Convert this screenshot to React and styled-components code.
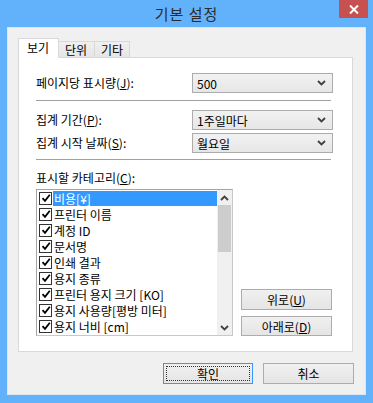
import styled, { createGlobalStyle } from 'styled-components';

const Global = createGlobalStyle`
  html, body { margin: 0; padding: 0; }
  body {
    font-family: "Noto Sans CJK KR", "Noto Sans", "Liberation Sans", sans-serif;
    font-size: 12px;
    color: #000;
  }
`;

// Fenêtre principale
const Window = styled.div`
  width: 373px;
  height: 403px;
  background: #62b1fb;
  box-sizing: border-box;
  padding: 0 7px 8px;
  display: flex;
  flex-direction: column;
`;

const TitleBar = styled.div`
  position: relative;
  height: 27px;
  display: flex;
  align-items: center;
  justify-content: center;
  font-size: 15px;
  color: #2b2b2b;
  letter-spacing: 1px;
`;

const CloseButton = styled.div`
  position: absolute;
  top: 0;
  right: -2px;
  width: 29px;
  height: 18px;
  background: #c75050;
  display: flex;
  align-items: center;
  justify-content: center;
`;

const Client = styled.div`
  flex: 1;
  background: #f0f0f0;
  border: 1px solid #dbe6f2;
  box-sizing: border-box;
  padding: 10px 0 0 10px;
  display: flex;
  flex-direction: column;
`;

const TabRow = styled.div`
  display: flex;
  align-items: flex-end;
  height: 20px;
  position: relative;
  z-index: 1;
  margin-bottom: -1px;
`;

const Tab = styled.div`
  box-sizing: border-box;
  width: ${p => p.$w}px;
  height: ${p => (p.$active ? 20 : 17)}px;
  border: 1px solid #d9d9d9;
  border-bottom: ${p => (p.$active ? 'none' : '1px solid #d9d9d9')};
  margin-left: ${p => (p.$first ? 0 : -1)}px;
  background: ${p => (p.$active ? '#fff' : 'linear-gradient(#f0f0f0, #e5e5e5)')};
  padding-left: ${p => (p.$active ? 8 : 6)}px;
  line-height: ${p => (p.$active ? 17 : 15)}px;
  font-size: 12px;
`;

const Panel = styled.div`
  width: 335px;
  box-sizing: border-box;
  background: #fff;
  border: 1px solid #d9d9d9;
  padding: 15px 19px 15px 17px;
`;

const FieldRow = styled.div`
  display: flex;
  align-items: center;
  justify-content: space-between;
  height: 20px;
  margin-top: ${p => p.$mt || 0}px;
`;

const Label = styled.span`
  font-size: 12px;
  line-height: 14px;
  color: #000;
`;

const Caption = styled(Label)`
  display: block;
  height: 14px;
`;

const Key = styled.span`
  text-decoration: underline;
`;

const Select = styled.div`
  box-sizing: border-box;
  width: 141px;
  height: 20px;
  border: 1px solid #acacac;
  background: linear-gradient(#f2f2f2, #e6e6e6);
  display: flex;
  align-items: center;
  justify-content: space-between;
  padding: 0 6px 0 4px;
  font-size: 12px;
`;

const Separator = styled.div`
  height: 1px;
  background: #a0a0a0;
  margin: ${p => p.$m};
`;

const ListArea = styled.div`
  display: flex;
  align-items: flex-end;
  margin-top: 4px;
`;

const ListBox = styled.div`
  width: 197px;
  height: 147px;
  box-sizing: border-box;
  border: 1px solid #a5a5a5;
  border-right-color: #c8c8c8;
  border-bottom-color: #c8c8c8;
  display: flex;
  overflow: hidden;
`;

const Items = styled.div`
  flex: 1;
  padding: 0 0 0 2px;
`;

const Item = styled.div`
  height: 16px;
  display: flex;
  align-items: center;
`;

const Check = styled.div`
  width: 11px;
  height: 11px;
  border: 1px solid #333;
  background: #fff;
  display: flex;
  align-items: center;
  justify-content: center;
  flex-shrink: 0;
`;

const ItemText = styled.span`
  margin-left: 1px;
  padding: 0 1px;
  flex: ${p => (p.$sel ? 1 : 'none')};
  height: 15px;
  line-height: 15px;
  background: ${p => (p.$sel ? '#3399ff' : 'transparent')};
  color: ${p => (p.$sel ? '#fff' : '#000')};
  font-size: 12px;
  white-space: nowrap;
`;

const ScrollBar = styled.div`
  width: 15px;
  background: #f0f0f0;
  display: flex;
  flex-direction: column;
`;

const ScrollArrow = styled.div`
  height: 15px;
  display: flex;
  align-items: center;
  justify-content: center;
`;

const ScrollThumb = styled.div`
  height: 47px;
  margin: 0 1px;
  background: #cdcdcd;
`;

const ScrollTrack = styled.div`
  flex: 1;
`;

const SideButtons = styled.div`
  display: flex;
  flex-direction: column;
  gap: 6px;
  margin-left: 8px;
`;

const Button = styled.div`
  box-sizing: border-box;
  width: ${p => p.$w || 91}px;
  height: ${p => p.$h || 21}px;
  border: 1px solid ${p => (p.$default ? '#3399ff' : '#acacac')};
  background: linear-gradient(#f0f0f0, #e5e5e5);
  display: flex;
  align-items: center;
  justify-content: center;
  font-size: 12px;
  position: relative;
`;

const FocusRing = styled.div`
  position: absolute;
  inset: 2px;
  border: 1px dotted #333;
`;

const Footer = styled.div`
  display: flex;
  justify-content: flex-end;
  gap: 10px;
  margin-top: 11px;
  padding-right: 11px;
`;

const Chevron = ({ up }) => (
  <svg width="9" height="6" viewBox="0 0 9 6">
    <path
      d={up ? 'M1 5 L4.5 1.5 L8 5' : 'M1 1 L4.5 4.5 L8 1'}
      fill="none"
      stroke="#404040"
      strokeWidth="1.8"
    />
  </svg>
);

const CheckMark = () => (
  <svg width="10" height="10" viewBox="0 0 10 10">
    <path d="M1.5 5.2 L4 7.8 L8.8 1.8" fill="none" stroke="#000" strokeWidth="1.8" />
  </svg>
);

const categories = [
  '비용[¥]',
  '프린터 이름',
  '계정 ID',
  '문서명',
  '인쇄 결과',
  '용지 종류',
  '프린터 용지 크기 [KO]',
  '용지 사용량[평방 미터]',
  '용지 너비 [cm]',
];

export default function App() {
  return (
    <>
      <Global />
      <Window>
        <TitleBar>
          기본 설정
          <CloseButton>
            <svg width="10" height="9" viewBox="0 0 10 9">
              <path d="M1 0.5 L9 8.5 M9 0.5 L1 8.5" stroke="#fff" strokeWidth="2" />
            </svg>
          </CloseButton>
        </TitleBar>
        <Client>
          <TabRow>
            <Tab $active $first $w={41}>보기</Tab>
            <Tab $w={37}>단위</Tab>
            <Tab $w={36}>기타</Tab>
          </TabRow>
          <Panel>
            <FieldRow>
              <Label>페이지당 표시량(<Key>J</Key>):</Label>
              <Select>500<Chevron /></Select>
            </FieldRow>
            <Separator $m="7px 2px 9px 0" />
            <FieldRow>
              <Label>집계 기간(<Key>P</Key>):</Label>
              <Select>1주일마다<Chevron /></Select>
            </FieldRow>
            <FieldRow $mt={3}>
              <Label>집계 시작 날짜(<Key>S</Key>):</Label>
              <Select>월요일<Chevron /></Select>
            </FieldRow>
            <Separator $m="6px 2px 11px 0" />
            <Caption>표시할 카테고리(<Key>C</Key>):</Caption>
            <ListArea>
              <ListBox>
                <Items>
                  {categories.map((c, i) => (
                    <Item key={c}>
                      <Check><CheckMark /></Check>
                      <ItemText $sel={i === 0}>{c}</ItemText>
                    </Item>
                  ))}
                </Items>
                <ScrollBar>
                  <ScrollArrow><Chevron up /></ScrollArrow>
                  <ScrollThumb />
                  <ScrollTrack />
                  <ScrollArrow><Chevron /></ScrollArrow>
                </ScrollBar>
              </ListBox>
              <SideButtons>
                <Button>위로(<Key>U</Key>)</Button>
                <Button $h={20}>아래로(<Key>D</Key>)</Button>
              </SideButtons>
            </ListArea>
          </Panel>
          <Footer>
            <Button $w={90} $default><FocusRing />확인</Button>
            <Button $w={91}>취소</Button>
          </Footer>
        </Client>
      </Window>
    </>
  );
}
